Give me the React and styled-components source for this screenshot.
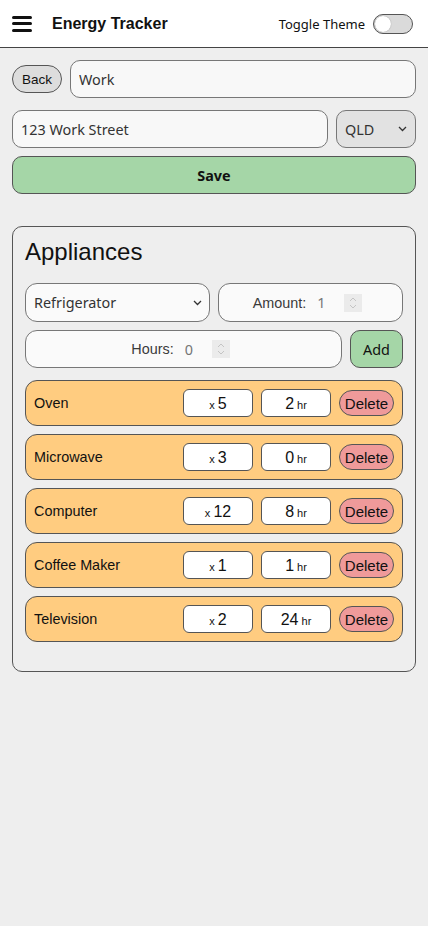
import React, { useState } from "react";
import styled, { createGlobalStyle } from "styled-components";

const GlobalStyle = createGlobalStyle`
  html, body {
    margin: 0;
    padding: 0;
    background: #eeeeee;
    font-family: "Liberation Sans", Arial, sans-serif;
    color: #111;
  }
  * {
    box-sizing: border-box;
  }
`;

const Page = styled.div`
  min-height: 926px;
  background: #eeeeee;
`;

const Header = styled.header`
  height: 48px;
  background: #ffffff;
  border-bottom: 1px solid #444;
  display: flex;
  align-items: center;
  padding: 0 15px 0 12px;
`;

const MenuButton = styled.button`
  width: 20px;
  height: 16px;
  padding: 0;
  border: none;
  background: none;
  display: flex;
  flex-direction: column;
  justify-content: space-between;
  cursor: pointer;
  margin-right: 20px;

  span {
    display: block;
    height: 3px;
    border-radius: 2px;
    background: #111;
  }
`;

const Title = styled.h1`
  margin: 0;
  font-size: 16px;
  font-weight: bold;
  flex: 1;
`;

const ThemeLabel = styled.span`
  font-family: "Noto Sans", sans-serif;
  font-size: 13px;
  color: #111;
  margin-right: 8px;
`;

const Switch = styled.button`
  width: 40px;
  height: 20px;
  border-radius: 10px;
  border: 1px solid #555;
  background: #dadada;
  padding: 1px;
  display: flex;
  align-items: center;
  cursor: pointer;

  span {
    width: 16px;
    height: 16px;
    border-radius: 50%;
    background: #fff;
    box-shadow: 0 0 1px rgba(0, 0, 0, 0.4);
    transform: translateX(${(p) => (p.$on ? "20px" : "0")});
  }
`;

const Main = styled.main`
  padding: 12px;
  display: flex;
  flex-direction: column;
`;

const Row = styled.div`
  display: flex;
  align-items: center;
  gap: 8px;
  margin-bottom: ${(p) => p.$mb || 0}px;
`;

const BackButton = styled.button`
  font-family: "Liberation Sans", Arial, sans-serif;
  font-size: 13.5px;
  color: #111;
  background: #dddddd;
  border: 1px solid #555;
  border-radius: 14px;
  height: 28px;
  width: 50px;
  padding: 0;
  cursor: pointer;
`;

const TextInput = styled.input`
  flex: 1;
  min-width: 0;
  height: 38px;
  padding: 0 8px;
  font-family: "Noto Sans", sans-serif;
  font-size: 14.4px;
  color: #333;
  background: #f8f8f8;
  border: 1px solid #777;
  border-radius: 10px;
  outline: none;
`;

const SelectWrap = styled.div`
  position: relative;
  display: flex;
  width: ${(p) => p.$w || "auto"};

  svg {
    position: absolute;
    right: ${(p) => p.$arrowRight || 9}px;
    top: 50%;
    margin-top: -3px;
    pointer-events: none;
  }
`;

const Select = styled.select`
  appearance: none;
  width: 100%;
  height: ${(p) => p.$h || 38}px;
  padding: 0 20px 0 8px;
  font-family: "Noto Sans", sans-serif;
  font-size: 14.4px;
  color: #333;
  background: ${(p) => p.$bg || "#fafafa"};
  border: 1px solid #777;
  border-radius: ${(p) => p.$r || 10}px;
  outline: none;
`;

const SaveButton = styled.button`
  height: 38px;
  width: 100%;
  font-family: "Noto Sans", sans-serif;
  font-size: 14.4px;
  font-weight: bold;
  color: #111;
  background: #a5d6a7;
  border: 1px solid #555;
  border-radius: 10px;
  cursor: pointer;
`;

const Card = styled.section`
  margin-top: 32px;
  border: 1px solid #555;
  border-radius: 10px;
  padding: 11px 12px 29px;
`;

const CardTitle = styled.h2`
  margin: 0 0 17px;
  font-size: 24px;
  font-weight: normal;
  line-height: 28px;
`;

const FormGrid = styled.div`
  display: grid;
  grid-template-columns: 1fr 1fr;
  gap: 8px;
  margin-bottom: 8px;
`;

const FieldBox = styled.label`
  height: ${(p) => p.$h || 38}px;
  display: flex;
  align-items: center;
  justify-content: center;
  background: #fafafa;
  border: 1px solid #777;
  border-radius: 12px;
  font-size: 14.4px;
  color: #3a3a3a;
`;

const NumberInput = styled.input`
  width: 33px;
  margin-left: 5px;
  padding: 0 0 0 6px;
  border: none;
  background: transparent;
  font-family: "Noto Sans", sans-serif;
  font-size: 14.4px;
  color: #8a8a8a;
  outline: none;
  appearance: textfield;

  &::-webkit-inner-spin-button,
  &::-webkit-outer-spin-button {
    -webkit-appearance: none;
    margin: 0;
  }
`;

const Spinner = styled.span`
  width: 18px;
  height: 18px;
  margin-right: 6px;
  background: #ebebeb;
  display: flex;
  align-items: center;
  justify-content: center;
`;

const HoursRow = styled.div`
  display: grid;
  grid-template-columns: 1fr 53px;
  gap: 8px;
  margin-bottom: 12px;
`;

const AddButton = styled.button`
  height: 38px;
  font-family: "Noto Sans", sans-serif;
  font-size: 14.4px;
  color: #111;
  background: #a5d6a7;
  border: 1px solid #555;
  border-radius: 10px;
  padding: 0;
  cursor: pointer;
`;

const List = styled.ul`
  list-style: none;
  margin: 0;
  padding: 0;
  display: flex;
  flex-direction: column;
  gap: 8px;
`;

const Item = styled.li`
  height: 46px;
  display: flex;
  align-items: center;
  gap: 8px;
  padding: 0 8px;
  background: #ffcc80;
  border: 1px solid #555;
  border-radius: 12px;
`;

const ItemName = styled.span`
  flex: 1;
  font-size: 14.4px;
  color: #111;
`;

const Pill = styled.span`
  width: 70px;
  height: 28px;
  display: flex;
  align-items: baseline;
  justify-content: center;
  padding-top: 5px;
  background: #fff;
  border: 1px solid #555;
  border-radius: 6px;
  font-size: 16px;
  color: #111;

  small {
    font-size: 11px;
  }
`;

const DeleteButton = styled.button`
  height: 26px;
  width: 55px;
  padding: 0;
  font-family: "Liberation Sans", Arial, sans-serif;
  font-size: 15px;
  color: #111;
  background: #ef9a9a;
  border: 1px solid #555;
  border-radius: 13px;
  cursor: pointer;
`;

const Chevron = () => (
  <svg width="9" height="6" viewBox="0 0 9 6">
    <path d="M1 1l3.5 3.5L8 1" fill="none" stroke="#333" strokeWidth="1.3" />
  </svg>
);

const SpinIcon = () => (
  <svg width="8" height="14" viewBox="0 0 8 14">
    <path d="M1 5l3-3 3 3M1 9l3 3 3-3" fill="none" stroke="#c4c4c4" strokeWidth="1" />
  </svg>
);

const NumberField = ({ label, placeholder, h }) => (
  <FieldBox $h={h}>
    {label}
    <NumberInput type="number" placeholder={placeholder} disabled />
    <Spinner>
      <SpinIcon />
    </Spinner>
  </FieldBox>
);

const initialItems = [
  { name: "Oven", count: 5, hours: 2 },
  { name: "Microwave", count: 3, hours: 0 },
  { name: "Computer", count: 12, hours: 8 },
  { name: "Coffee Maker", count: 1, hours: 1 },
  { name: "Television", count: 2, hours: 24 },
];

const App = () => {
  const [dark, setDark] = useState(false);
  const [items, setItems] = useState(initialItems);

  return (
    <Page>
      <GlobalStyle />
      <Header>
        <MenuButton aria-label="Menu">
          <span />
          <span />
          <span />
        </MenuButton>
        <Title>Energy Tracker</Title>
        <ThemeLabel>Toggle Theme</ThemeLabel>
        <Switch $on={dark} onClick={() => setDark(!dark)} aria-label="Toggle Theme">
          <span />
        </Switch>
      </Header>

      <Main>
        <Row $mb={12}>
          <BackButton>Back</BackButton>
          <TextInput defaultValue="Work" />
        </Row>
        <Row $mb={8}>
          <TextInput defaultValue="123 Work Street" />
          <SelectWrap $w="80px">
            <Select defaultValue="QLD" $bg="#e2e2e2">
              <option>NSW</option>
              <option>VIC</option>
              <option>QLD</option>
              <option>WA</option>
              <option>SA</option>
              <option>TAS</option>
              <option>ACT</option>
              <option>NT</option>
            </Select>
            <Chevron />
          </SelectWrap>
        </Row>
        <SaveButton>Save</SaveButton>

        <Card>
          <CardTitle>Appliances</CardTitle>
          <FormGrid>
            <SelectWrap $arrowRight={8}>
              <Select defaultValue="Refrigerator" $h={39} $r={12}>
                <option>Refrigerator</option>
                <option>Oven</option>
                <option>Microwave</option>
                <option>Computer</option>
                <option>Coffee Maker</option>
                <option>Television</option>
              </Select>
              <Chevron />
            </SelectWrap>
            <NumberField label="Amount:" placeholder="1" h={39} />
          </FormGrid>
          <HoursRow>
            <NumberField label="Hours:" placeholder="0" />
            <AddButton>Add</AddButton>
          </HoursRow>

          <List>
            {items.map((item, i) => (
              <Item key={item.name}>
                <ItemName>{item.name}</ItemName>
                <Pill>
                  <small>x&nbsp;</small>
                  {item.count}
                </Pill>
                <Pill>
                  {item.hours}
                  <small>&nbsp;hr</small>
                </Pill>
                <DeleteButton onClick={() => setItems(items.filter((_, j) => j !== i))}>
                  Delete
                </DeleteButton>
              </Item>
            ))}
          </List>
        </Card>
      </Main>
    </Page>
  );
};

export default App;
